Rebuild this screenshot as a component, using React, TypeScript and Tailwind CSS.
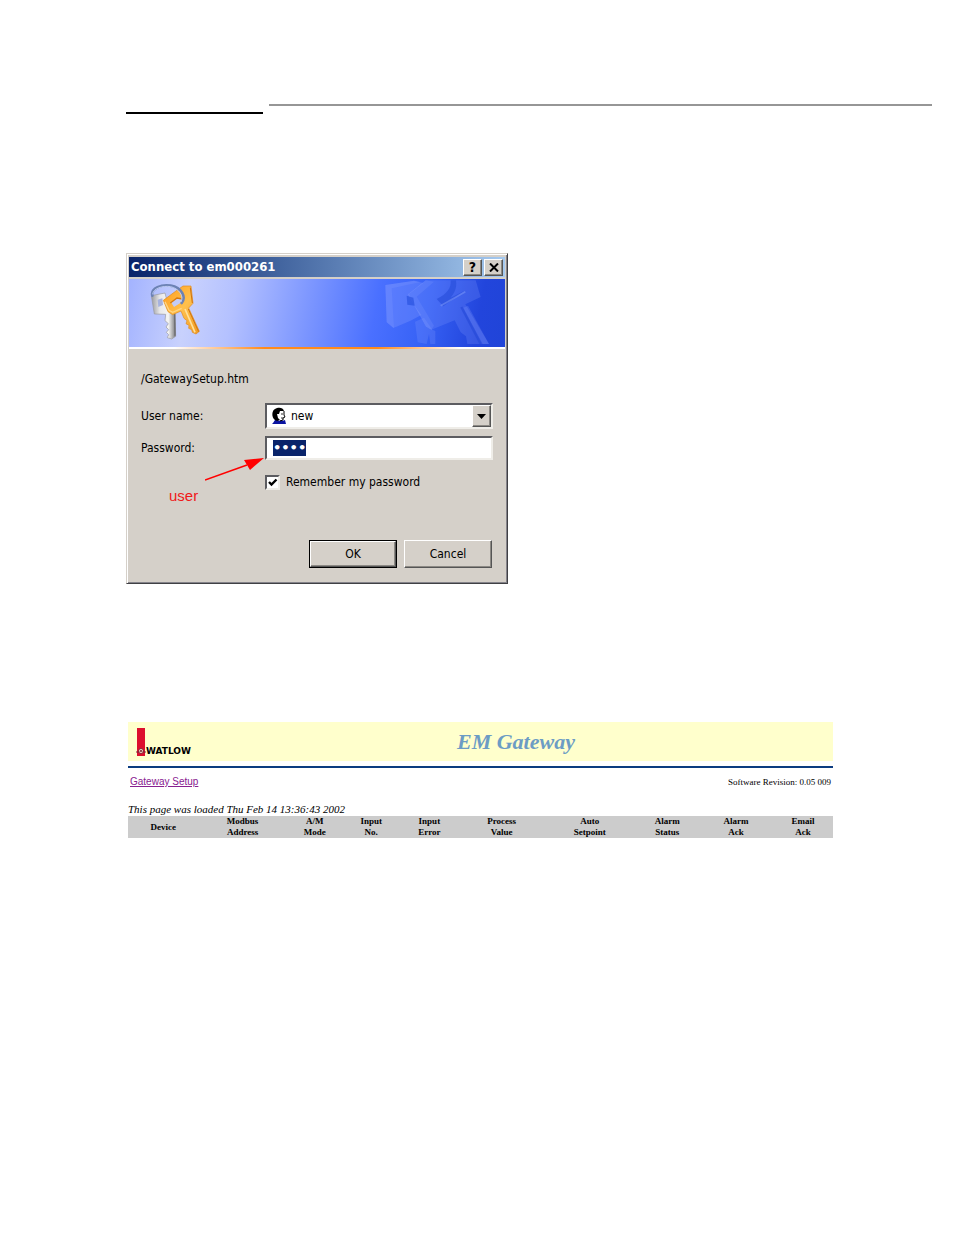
import { ReactNode } from "react";

const columns = [
  { top: "", bottom: "Device", width: "w-[10%]" },
  { top: "Modbus", bottom: "Address", width: "w-[12.5%]" },
  { top: "A/M", bottom: "Mode", width: "w-[8%]" },
  { top: "Input", bottom: "No.", width: "w-[8%]" },
  { top: "Input", bottom: "Error", width: "w-[8.5%]" },
  { top: "Process", bottom: "Value", width: "w-[12%]" },
  { top: "Auto", bottom: "Setpoint", width: "w-[13%]" },
  { top: "Alarm", bottom: "Status", width: "w-[9%]" },
  { top: "Alarm", bottom: "Ack", width: "w-[10.5%]" },
  { top: "Email", bottom: "Ack", width: "w-[8.5%]" },
];

const raised =
  "bg-[#d5d0c9] border border-t-white border-l-white border-r-[#555] border-b-[#555] shadow-[inset_-1px_-1px_0_#8c8984]";
const sunken =
  "bg-white border-2 border-t-[#5c5c60] border-l-[#5c5c60] border-r-[#efede8] border-b-[#efede8]";

const KeysIcon = () => (
  <svg viewBox="0 0 156 174" className="h-[58px] w-[52px]" aria-hidden="true">
    <defs>
      <linearGradient id="silver" x1="0" x2="1">
        <stop offset="0" stopColor="#98999e" />
        <stop offset="0.35" stopColor="#e8e8ea" />
        <stop offset="0.7" stopColor="#f4f4f4" />
        <stop offset="1" stopColor="#77777a" />
      </linearGradient>
      <linearGradient id="gold" x1="0" x2="1" y2="1">
        <stop offset="0" stopColor="#ff9c1c" />
        <stop offset="0.5" stopColor="#ffc04c" />
        <stop offset="1" stopColor="#f09a20" />
      </linearGradient>
    </defs>
    <path
      d="M7 38 48 30 62 86 78 90 80 160 68 168 55 164 59 155 52 148 59 140 51 132 58 122 48 113 50 94 16 93Z"
      fill="url(#silver)"
      stroke="#98999f"
      strokeWidth="2"
    />
    <path d="M26 50 40 46 42 66 28 72Z" fill="#a6b2de" />
    <path d="M77 92 78 158" stroke="#6d6d70" strokeWidth="4" />
    <path
      d="M43 52 78 26 102 9 126 9 132 61 119 75 151 145 141 153 130 148 128 140 119 136 120 127 111 122 114 113 105 106 96 84 71 95 57 86Z"
      fill="url(#gold)"
      stroke="#e08a1c"
      strokeWidth="2"
    />
    <path d="M66 58 84 46 99 49 94 60 75 72Z" fill="#c3ccf6" />
    <path d="M64 60 84 45 100 48" fill="none" stroke="#d5780e" strokeWidth="4" />
    <path d="M48 56 60 82 71 88 98 76" fill="none" stroke="#ffd684" strokeWidth="4" />
    <path d="M108 78 138 148" stroke="#ffe09a" strokeWidth="5" />
    <path d="M118 78 149 146M124 14 130 60" stroke="#cf7410" strokeWidth="3" />
    <path
      d="M10 38C4 16 39 3 65 8 99 14 112 42 98 60"
      fill="none"
      stroke="#6c82b4"
      strokeWidth="8"
      strokeLinecap="round"
    />
    <path d="M11 34C12 16 42 7 65 11 91 17 105 40 96 57" fill="none" stroke="#bccaf0" strokeWidth="3" />
  </svg>
);

const KeysWatermark = () => (
  <svg viewBox="0 0 315 201" className="h-[67px] w-[105px]" aria-hidden="true">
    <g fill="#87a0ff">
      <path d="M4 18 90 5 118 12 75 45 88 74 112 108 78 126 28 147 8 130Z" opacity=".3" />
      <path d="M4 18 90 5 110 9 23 28 30 147 8 130Z" opacity=".22" />
      <path d="M93 128 120 116 145 152 154 156 154 195 139 195 135 165 128 195 101 190Z" opacity=".22" />
      <path d="M72 46 125 4 275 4 290 54 244 76 315 195 250 195 246 172 230 160 212 124 142 152 126 143Z" opacity=".22" />
      <path d="M72 46 125 4 150 8 98 53 150 140 142 152 126 143Z" opacity=".2" />
      <path d="M238 86 252 80 315 195 296 195Z" opacity=".22" />
    </g>
    <path d="M68 50 88 56 92 80 70 77Z" fill="#2a52e0" opacity=".7" />
    <path d="M158 60C190 44 202 28 200 4H216C220 30 208 46 200 56L240 36 178 82Z" fill="#2a50dd" opacity=".7" />
    <path d="M170 80 244 38" stroke="#7f9af9" strokeWidth="5" opacity=".5" />
    <path d="M232 84 290 195" stroke="#2448d8" strokeWidth="7" opacity=".6" />
  </svg>
);

const UserIcon = () => (
  <svg viewBox="0 0 16 18" className="h-[18px] w-4 shrink-0" aria-hidden="true">
    <path d="M2 16 4 13 7 12 11 14 14 13 15 17H1Z" fill="#0a14a0" />
    <path d="M5 4 11 3 13 6 12 12 8 14 5 11Z" fill="#fff" />
    <path d="M4 13C0 10 1 3 4 2 7 0 12 0 13 4L9 4 8 7 6 7 7 11 9 13 6 14Z" fill="#000" />
    <path d="M13 4V8L14 10 12 11V13L9 14" fill="none" stroke="#000" />
    <path d="M10 7H12M10 11H12" stroke="#333" />
  </svg>
);

const WatlowLogo = () => (
  <div className="flex items-end">
    <svg viewBox="0 0 10 28" className="h-7 w-[10px]" aria-hidden="true">
      <path d="M1 0H9V28H1Z" fill="#dd0f2e" />
      <circle cx="5" cy="23" r="2.500" fill="#f8e0cc" stroke="#8a2030" />
      <path d="M0 24H3M7 24H10M4 24 5 22 6 24" fill="none" stroke="#7a2335" />
    </svg>
    <span className="font-['DejaVu_Sans',sans-serif] text-[9px] leading-[9px] font-bold text-black">WATLOW</span>
  </div>
);

const TitleButton = ({ label, children }: { label: string; children: ReactNode }) => (
  <button
    type="button"
    aria-label={label}
    className={`flex h-[17px] w-[19px] items-center justify-center text-[14px] leading-none font-bold ${raised}`}
  >
    {children}
  </button>
);

const ConnectDialog = () => (
  <form
    onSubmit={(e) => e.preventDefault()}
    className="relative w-full max-w-[382px] border border-t-[#d5d0c9] border-l-[#d5d0c9] border-r-[#404044] border-b-[#404044] bg-[#d5d0c9] px-0.5 pt-[3px] pb-0.5 font-['DejaVu_Sans_Condensed','DejaVu_Sans',sans-serif] text-[12px] leading-4 text-black shadow-[inset_1px_1px_0_#fff,inset_-1px_-1px_0_#85838a]"
  >
    <div className="flex h-5 items-center gap-0.5 bg-linear-to-r from-[#0a246a] to-[#a6caf0] px-0.5">
      <h1 className="flex-1 text-[13px] font-bold text-white">Connect to em000261</h1>
      <TitleButton label="Help">?</TitleButton>
      <TitleButton label="Close">
        <svg viewBox="0 0 10 9" className="h-[9px] w-[10px]" aria-hidden="true">
          <path d="M1 0.5 9 8.5M9 0.5 1 8.5" stroke="#000" strokeWidth="2" />
        </svg>
      </TitleButton>
    </div>

    <div className="mt-0.5 flex h-[68px] justify-between bg-[linear-gradient(100deg,#a3b3ff_0%,#c8d1fd_16%,#b4c1ff_28%,#7b95ff_48%,#4a70ff_65%,#3762f6_78%,#2245dc_92%,#2044d8_100%)] pt-1 pr-4 pl-5">
      <KeysIcon />
      <div className="-mt-1">
        <KeysWatermark />
      </div>
    </div>
    <div className="h-0.5 bg-[linear-gradient(90deg,#fff_0%,#fff_12%,#ff8a1c_36%,#ff8a1c_66%,#fff_88%)]" />

    <div className="px-3 pt-[22px] pb-[13px]">
      <p>/GatewaySetup.htm</p>

      <div className="mt-4 flex items-center">
        <label htmlFor="username" className="w-[124px] shrink-0">
          User name:
        </label>
        <div className={`flex h-[26px] min-w-0 flex-1 items-center pl-1 ${sunken}`}>
          <UserIcon />
          <select id="username" className="h-full min-w-0 flex-1 appearance-none bg-transparent pl-1 outline-none">
            <option>new</option>
          </select>
          <span className={`pointer-events-none flex h-full w-[19px] items-center justify-center ${raised}`}>
            <svg viewBox="0 0 9 5" className="h-[5px] w-[9px]" aria-hidden="true">
              <path d="M0 0H9L4.5 5Z" />
            </svg>
          </span>
        </div>
      </div>

      <div className="mt-[7px] flex items-center">
        <label htmlFor="password" className="w-[124px] shrink-0">
          Password:
        </label>
        <div className={`flex h-6 min-w-0 flex-1 items-center pl-1.5 ${sunken}`}>
          <input
            id="password"
            type="password"
            defaultValue="user"
            className="field-sizing-content h-4 bg-[#0a246a] font-['DejaVu_Sans',sans-serif] text-[13px] font-bold text-white outline-none"
          />
        </div>
      </div>

      <div className="mt-3.5 ml-[124px] flex items-center gap-1.5">
        <span className="grid">
          <input
            id="remember"
            type="checkbox"
            defaultChecked
            className={`peer col-start-1 row-start-1 size-[15px] appearance-none ${sunken}`}
          />
          <svg
            viewBox="0 0 15 15"
            className="pointer-events-none invisible col-start-1 row-start-1 size-[15px] peer-checked:visible"
            aria-hidden="true"
          >
            <path d="M4 7 6.500 9.500 11.500 4.500" fill="none" stroke="#000" strokeWidth="2.400" />
          </svg>
        </span>
        <label htmlFor="remember">Remember my password</label>
      </div>

      <div className="mt-[50px] flex justify-end gap-[7px] pr-px">
        <div className="border border-black">
          <button type="submit" className={`h-[26px] w-[86px] ${raised}`}>
            OK
          </button>
        </div>
        <button type="button" className={`h-7 w-[88px] ${raised}`}>
          Cancel
        </button>
      </div>
    </div>

    {/* Callout pointing at the password field */}
    <div className="pointer-events-none absolute top-[202px] left-[42px] text-[#f01818]">
      <svg viewBox="0 0 60 26" className="ml-9 h-[26px] w-[60px]" aria-hidden="true">
        <path d="M0 24 42 9" stroke="#f00" strokeWidth="1.500" />
        <path d="M59 2 39 4 45 14Z" fill="#f00" />
      </svg>
      <span className="block pt-1 font-['Liberation_Sans',sans-serif] text-[15px] leading-5">user</span>
    </div>
  </form>
);

const GatewayPage = () => (
  <section className="font-['Liberation_Serif',serif] text-black">
    <div className="flex h-[39px] items-center gap-2 bg-[#ffffcc] pl-2">
      <WatlowLogo />
      <h2 className="flex-1 text-center text-[22px] leading-7 font-bold text-[#6c9cc4] italic">EM Gateway</h2>
    </div>
    <div className="mt-[5px] h-0.5 bg-[#0c3c80]" />
    <div className="flex items-center justify-between px-0.5 pt-1.5 leading-4">
      <a href="#setup" className="font-['Liberation_Sans',sans-serif] text-[10px] text-[#882090] underline">
        Gateway Setup
      </a>
      <span className="text-[9px]">Software Revision: 0.05 009</span>
    </div>
    <p className="mt-3 text-[11px] leading-[14px] italic">This page was loaded Thu Feb 14 13:36:43 2002</p>
    <table className="w-full table-fixed border-collapse bg-[#cccccc] text-[9px] leading-[11px]">
      <thead>
        <tr>
          {columns.map(({ top, bottom, width }) => (
            <th key={top + bottom} scope="col" className={`p-0 align-middle font-bold ${width}`}>
              {top}
              {top && <br />}
              {bottom}
            </th>
          ))}
        </tr>
      </thead>
    </table>
  </section>
);

const App = () => {
  return (
    <main className="min-h-screen bg-white pt-[104px] pr-[22px] pl-[126px]">
      <header className="flex h-[10px] gap-1.5">
        <div className="h-0.5 w-[137px] self-end bg-black" />
        <div className="h-0.5 flex-1 bg-[#969696]" />
      </header>
      <div className="mt-[139px]">
        <ConnectDialog />
      </div>
      <div className="mt-[138px] mr-[99px] ml-0.5">
        <GatewayPage />
      </div>
    </main>
  );
};

export default App;
